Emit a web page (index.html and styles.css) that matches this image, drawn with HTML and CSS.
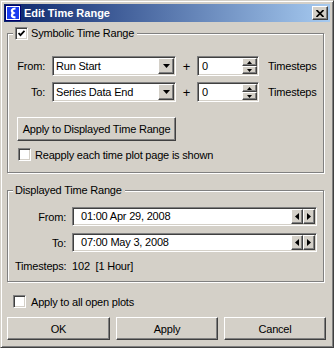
FILE: index.html
```html
<!DOCTYPE html>
<html lang="en">
<head>
    <meta charset="UTF-8">
    <title>Edit Time Range</title>
    <link rel="stylesheet" href="styles.css">
</head>
<body>
    <div class="window">
        <div class="titlebar">
            <svg class="app-icon" width="16" height="16" viewBox="0 0 16 16">
                <rect width="16" height="16" fill="#00006e"/>
                <rect x="1.5" y="1.5" width="13" height="13" fill="#1a3cf0" stroke="#fff"/>
                <path d="M10.5 3.5 C7 3.5 5.5 6 8.5 8 C6 9.5 6 12 10.5 12.5" stroke="#fff" stroke-width="2.2" fill="none"/>
            </svg>
            <span class="title-text">Edit Time Range</span>
            <span class="close-btn raised">
                <svg width="8" height="7" viewBox="0 0 8 7"><path d="M0.5 0 L7.5 7 M7.5 0 L0.5 7" stroke="#000" stroke-width="1.7"/></svg>
            </span>
        </div>

        <div class="dialog">
            <div class="group group-symbolic">
                <div class="group-title">
                    <span class="check">
                        <svg width="7" height="7" viewBox="0 0 7 7"><path d="M0.5 3 L2.5 5.2 L6.5 0.8" stroke="#000" stroke-width="1.8" fill="none"/></svg>
                    </span>
                    <span>Symbolic Time Range</span>
                </div>
                <div class="sym-row first">
                    <span class="label">From:</span>
                    <div class="combo sunken">
                        <span class="field-text">Run Start</span>
                        <span class="combo-arrow raised"><svg width="7" height="4" viewBox="0 0 7 4"><polygon points="0,0 7,0 3.5,4" fill="#000"/></svg></span>
                    </div>
                    <span class="plus">+</span>
                    <div class="spinner sunken">
                        <span class="field-text spin-text">0</span>
                        <span class="spin-btns">
                            <span class="spin-btn raised"><svg width="5" height="3" viewBox="0 0 5 3"><polygon points="2.5,0 5,3 0,3" fill="#000"/></svg></span>
                            <span class="spin-btn raised"><svg width="5" height="3" viewBox="0 0 5 3"><polygon points="0,0 5,0 2.5,3" fill="#000"/></svg></span>
                        </span>
                    </div>
                    <span class="unit">Timesteps</span>
                </div>
                <div class="sym-row">
                    <span class="label">To:</span>
                    <div class="combo sunken">
                        <span class="field-text">Series Data End</span>
                        <span class="combo-arrow raised"><svg width="7" height="4" viewBox="0 0 7 4"><polygon points="0,0 7,0 3.5,4" fill="#000"/></svg></span>
                    </div>
                    <span class="plus">+</span>
                    <div class="spinner sunken">
                        <span class="field-text spin-text">0</span>
                        <span class="spin-btns">
                            <span class="spin-btn raised"><svg width="5" height="3" viewBox="0 0 5 3"><polygon points="2.5,0 5,3 0,3" fill="#000"/></svg></span>
                            <span class="spin-btn raised"><svg width="5" height="3" viewBox="0 0 5 3"><polygon points="0,0 5,0 2.5,3" fill="#000"/></svg></span>
                        </span>
                    </div>
                    <span class="unit">Timesteps</span>
                </div>
                <button class="btn raised apply-range">Apply to Displayed Time Range</button>
                <label class="check-row reapply">
                    <span class="check"></span>
                    <span>Reapply each time plot page is shown</span>
                </label>
            </div>

            <div class="group group-displayed">
                <div class="group-title plain">Displayed Time Range</div>
                <div class="date-row first">
                    <span class="label wide">From:</span>
                    <div class="date-field sunken">
                        <span class="field-text date-text">01:00 Apr 29, 2008</span>
                        <span class="scroll-btn raised"><svg width="4" height="7" viewBox="0 0 4 7"><polygon points="4,0 4,7 0,3.5" fill="#000"/></svg></span>
                        <span class="scroll-btn raised"><svg width="4" height="7" viewBox="0 0 4 7"><polygon points="0,0 4,3.5 0,7" fill="#000"/></svg></span>
                    </div>
                </div>
                <div class="date-row">
                    <span class="label wide">To:</span>
                    <div class="date-field sunken">
                        <span class="field-text date-text">07:00 May 3, 2008</span>
                        <span class="scroll-btn raised"><svg width="4" height="7" viewBox="0 0 4 7"><polygon points="4,0 4,7 0,3.5" fill="#000"/></svg></span>
                        <span class="scroll-btn raised"><svg width="4" height="7" viewBox="0 0 4 7"><polygon points="0,0 4,3.5 0,7" fill="#000"/></svg></span>
                    </div>
                </div>
                <div class="timesteps">Timesteps:  102  [1 Hour]</div>
            </div>

            <label class="check-row all-plots">
                <span class="check"></span>
                <span>Apply to all open plots</span>
            </label>

            <div class="buttons">
                <button class="btn raised ok">OK</button>
                <button class="btn raised">Apply</button>
                <button class="btn raised">Cancel</button>
            </div>
        </div>
    </div>
</body>
</html>
```

FILE: styles.css
```css
body {
    margin: 0;
    background: #fff;
    font-family: "Liberation Sans", Arial, sans-serif;
    font-size: 11px;
    letter-spacing: -0.2px;
    color: #000;
}
.window {
    width: 334px;
    height: 348px;
    box-sizing: border-box;
    background: #d4d0c8;
    border: 1px solid;
    border-color: #d4d0c8 #404040 #404040 #d4d0c8;
    box-shadow: inset 1px 1px #fff, inset -1px -1px #808080;
    padding: 3px;
    display: flex;
    flex-direction: column;
}
.sunken {
    box-sizing: border-box;
    border: 1px solid;
    border-color: #808080 #fff #fff #808080;
    box-shadow: inset 1px 1px #404040, inset -1px -1px #d4d0c8;
    padding: 1px;
    background: #fff;
}
.raised {
    box-sizing: border-box;
    border: 1px solid;
    border-color: #fff #404040 #404040 #fff;
    box-shadow: inset -1px -1px #808080;
    background: #d4d0c8;
}
.titlebar {
    height: 18px;
    flex: none;
    display: flex;
    align-items: center;
    padding: 0 2px 0 1px;
    background: linear-gradient(to right, #0a246a, #a6caf0);
    color: #fff;
}
.app-icon {
    display: block;
}
.title-text {
    margin-left: 3px;
    flex: 1;
    font-weight: bold;
    letter-spacing: 0;
}
.close-btn {
    width: 16px;
    height: 14px;
    display: flex;
    align-items: center;
    justify-content: center;
}
.dialog {
    flex: 1;
    display: flex;
    flex-direction: column;
    padding: 0 4px 0 3px;
}
.group {
    border: 1px solid #808080;
    box-shadow: inset 1px 1px #fff, 1px 1px #fff;
    margin-right: 2px;
    display: flex;
    flex-direction: column;
    align-items: flex-start;
}
.group-symbolic {
    margin-top: 11px;
    padding-bottom: 11px;
}
.group-displayed {
    margin-top: 17px;
    padding-bottom: 8px;
}
.group-title {
    height: 13px;
    margin: -7px 0 0 5px;
    padding: 0 3px 0 2px;
    background: #d4d0c8;
    display: flex;
    align-items: center;
    gap: 3px;
    line-height: 13px;
}
.check {
    width: 13px;
    height: 13px;
    flex: none;
    box-sizing: border-box;
    border: 1px solid;
    border-color: #808080 #fff #fff #808080;
    box-shadow: inset 1px 1px #404040, inset -1px -1px #d4d0c8;
    background: #fff;
    display: flex;
    align-items: center;
    justify-content: center;
}
.sym-row, .date-row {
    display: flex;
    align-items: center;
}
.sym-row {
    margin-top: 6px;
}
.sym-row.first {
    margin-top: 16px;
}
.label {
    width: 37px;
    text-align: right;
    margin-right: 7px;
}
.label.wide {
    width: 58px;
    margin-right: 6px;
}
.combo {
    width: 124px;
    height: 20px;
    display: flex;
}
.field-text {
    flex: 1;
    line-height: 16px;
    padding-left: 2px;
    white-space: nowrap;
    overflow: hidden;
}
.combo-arrow {
    width: 16px;
    height: 16px;
    display: flex;
    align-items: center;
    justify-content: center;
}
.plus {
    width: 21px;
    text-align: center;
    font-size: 13px;
    letter-spacing: 0;
}
.spinner {
    width: 62px;
    height: 20px;
    display: flex;
}
.spin-text {
    padding-left: 3px;
}
.spin-btns {
    width: 15px;
    display: flex;
    flex-direction: column;
}
.spin-btn {
    height: 8px;
    display: flex;
    align-items: center;
    justify-content: center;
}
.unit {
    margin-left: 9px;
}
.btn {
    font: inherit;
    letter-spacing: inherit;
    color: #000;
    padding: 0;
    margin: 0;
}
.apply-range {
    width: 159px;
    height: 24px;
    margin: 15px 0 0 9px;
}
.check-row {
    display: flex;
    align-items: center;
    height: 13px;
}
.reapply {
    margin: 7px 0 0 10px;
    gap: 4px;
}
.date-row {
    margin-top: 7px;
}
.date-row.first {
    margin-top: 10px;
}
.date-field {
    width: 245px;
    height: 19px;
    display: flex;
}
.date-text {
    line-height: 15px;
    padding-left: 7px;
}
.scroll-btn {
    width: 12px;
    height: 15px;
    display: flex;
    align-items: center;
    justify-content: center;
}
.timesteps {
    margin: 8px 0 0 7px;
    line-height: 13px;
    white-space: pre;
}
.all-plots {
    margin: 13px 0 0 6px;
    gap: 5px;
}
.buttons {
    display: flex;
    gap: 6px;
    margin-top: 9px;
}
.buttons .btn {
    width: 102px;
    height: 23px;
}
.buttons .ok {
    width: 103px;
}
```
